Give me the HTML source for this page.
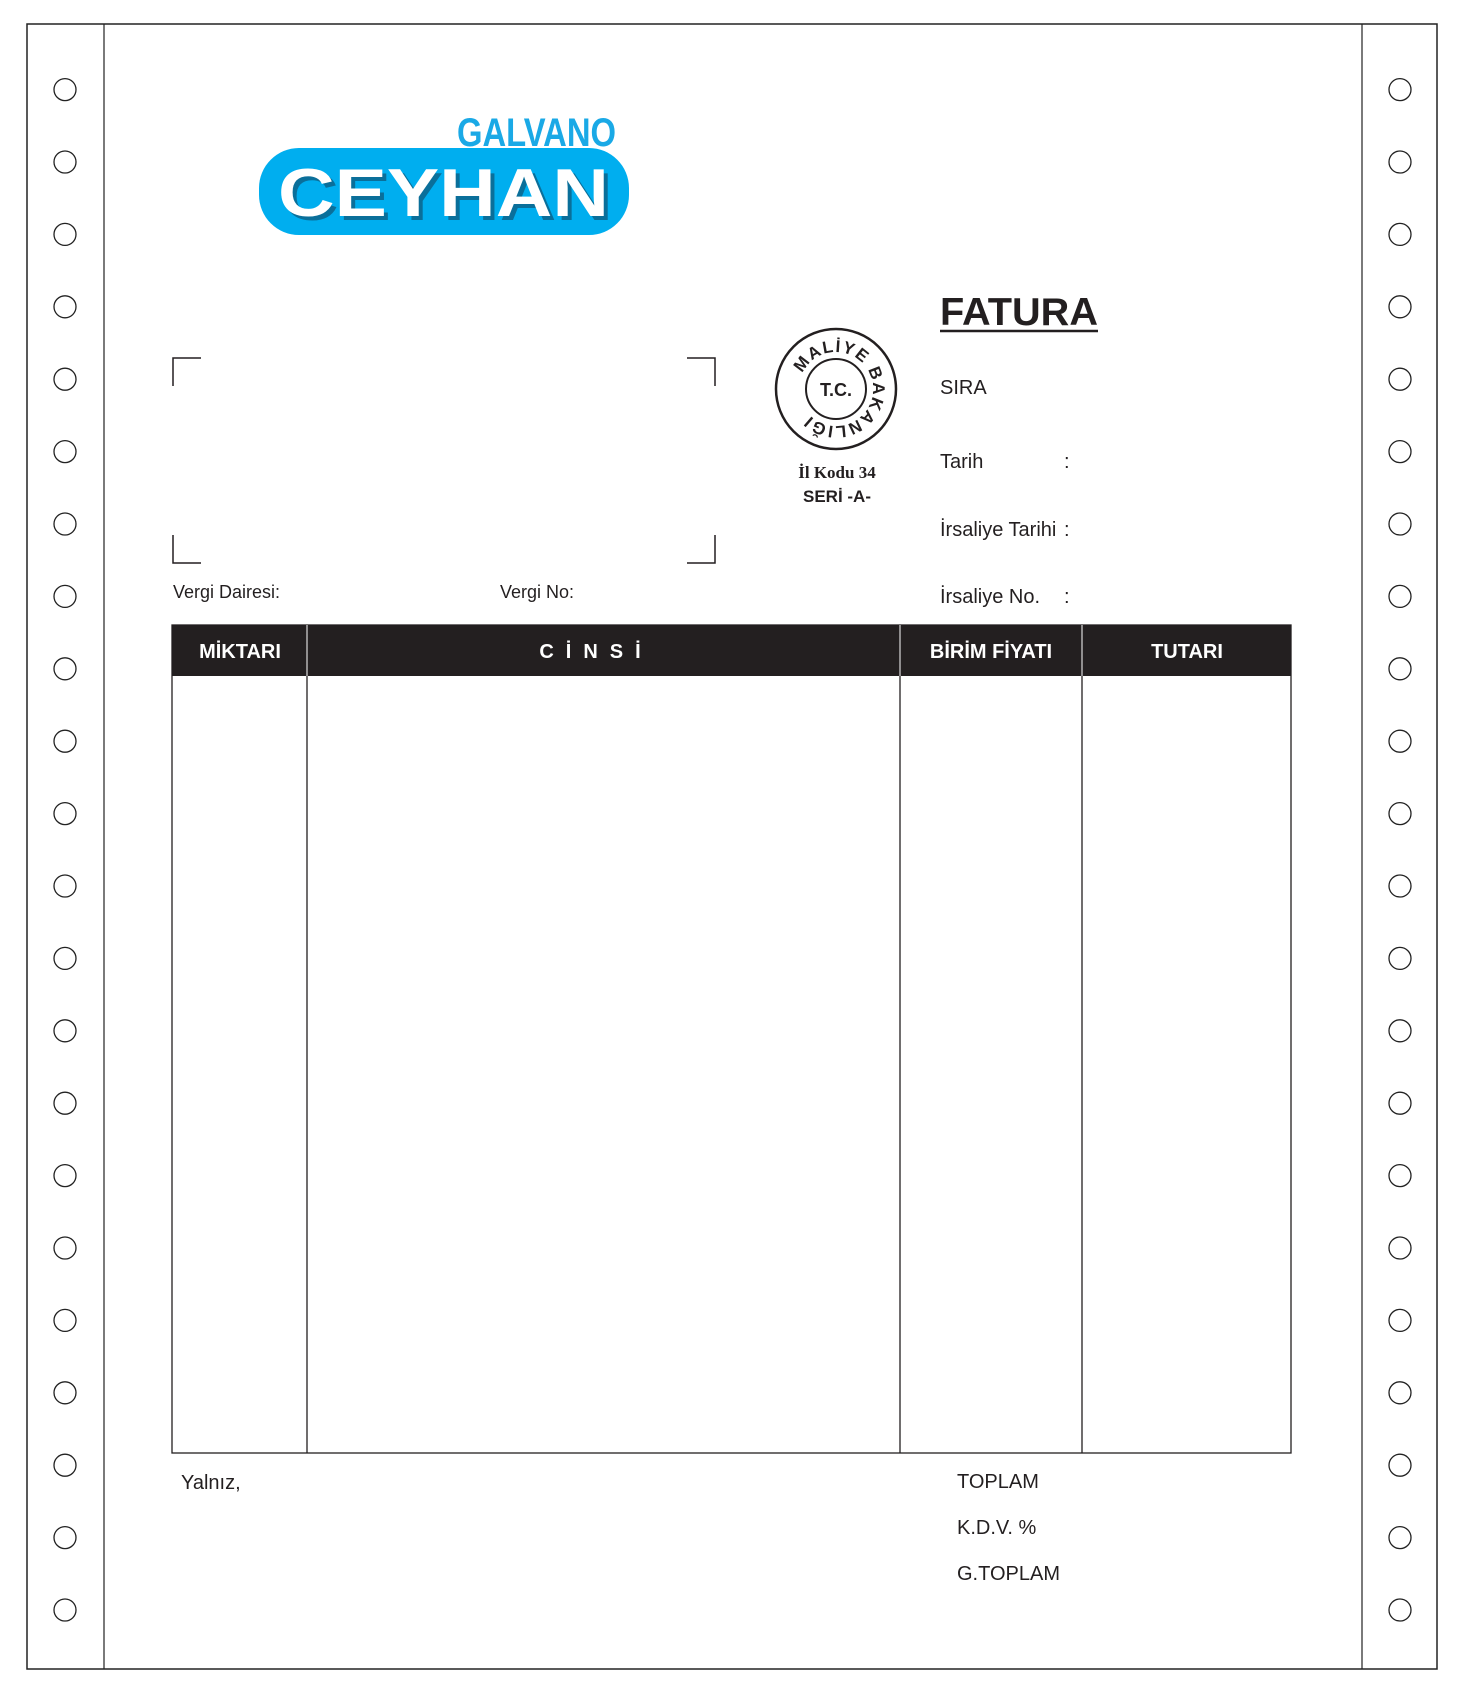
<!DOCTYPE html>
<html><head><meta charset="utf-8"><style>
html,body{margin:0;padding:0;background:#fff}
svg{display:block}
text{font-family:"Liberation Sans",sans-serif}
</style></head><body>
<svg width="1465" height="1695" viewBox="0 0 1465 1695" xmlns="http://www.w3.org/2000/svg">
<rect x="27" y="24" width="1410" height="1645" fill="none" stroke="#222" stroke-width="1.5"/>
<line x1="104" y1="24" x2="104" y2="1669" stroke="#222" stroke-width="1.2"/>
<line x1="1362" y1="24" x2="1362" y2="1669" stroke="#222" stroke-width="1.2"/>
<g fill="none" stroke="#222" stroke-width="1.3" id="holes">
<circle cx="65" cy="89.6" r="11"/><circle cx="65" cy="162" r="11"/><circle cx="65" cy="234.4" r="11"/><circle cx="65" cy="306.8" r="11"/><circle cx="65" cy="379.2" r="11"/><circle cx="65" cy="451.6" r="11"/><circle cx="65" cy="524" r="11"/><circle cx="65" cy="596.4" r="11"/><circle cx="65" cy="668.8" r="11"/><circle cx="65" cy="741.2" r="11"/><circle cx="65" cy="813.6" r="11"/><circle cx="65" cy="886" r="11"/><circle cx="65" cy="958.4" r="11"/><circle cx="65" cy="1030.8" r="11"/><circle cx="65" cy="1103.2" r="11"/><circle cx="65" cy="1175.6" r="11"/><circle cx="65" cy="1248" r="11"/><circle cx="65" cy="1320.4" r="11"/><circle cx="65" cy="1392.8" r="11"/><circle cx="65" cy="1465.2" r="11"/><circle cx="65" cy="1537.6" r="11"/><circle cx="65" cy="1610" r="11"/>
</g>
<use href="#holes" x="1335"/>
<!-- logo -->
<text x="457" y="146" font-size="40" font-weight="bold" fill="#1aa9e6" textLength="159" lengthAdjust="spacingAndGlyphs">GALVANO</text>
<rect x="259" y="148" width="370" height="87" rx="40" fill="#00aeef"/>
<text x="282" y="220" font-size="68" font-weight="bold" fill="#0a6f9a" textLength="331" lengthAdjust="spacingAndGlyphs">CEYHAN</text>
<text x="278" y="216" font-size="68" font-weight="bold" fill="#fff" textLength="331" lengthAdjust="spacingAndGlyphs">CEYHAN</text>
<!-- fatura -->
<text x="940" y="325" font-size="39" font-weight="bold" fill="#231f20" textLength="158" lengthAdjust="spacingAndGlyphs">FATURA</text>
<line x1="940" y1="331" x2="1098" y2="331" stroke="#231f20" stroke-width="2.5"/>
<g font-size="20" fill="#231f20">
<text x="940" y="394">SIRA</text>
<text x="940" y="468">Tarih</text><text x="1064" y="468">:</text>
<text x="940" y="536">İrsaliye Tarihi</text><text x="1064" y="536">:</text>
<text x="940" y="603">İrsaliye No.</text><text x="1064" y="603">:</text>
<text x="173" y="598" font-size="18">Vergi Dairesi:</text>
<text x="500" y="598" font-size="18">Vergi No:</text>
<text x="181" y="1489">Yalnız,</text>
<text x="957" y="1488">TOPLAM</text>
<text x="957" y="1534">K.D.V. %</text>
<text x="957" y="1580">G.TOPLAM</text>
</g>
<!-- stamp -->
<circle cx="836" cy="389" r="60" fill="none" stroke="#231f20" stroke-width="2.5"/>
<circle cx="836" cy="389" r="30" fill="none" stroke="#231f20" stroke-width="2"/>
<defs><path id="arc" d="M836,389 m-37,0 a37,37 0 1,1 74,0 a37,37 0 1,1 -74,0"/></defs>
<text font-size="17" font-weight="bold" fill="#231f20" letter-spacing="1.5"><textPath href="#arc" startOffset="16">MALİYE BAKANLIĞI</textPath></text>
<text x="836" y="396" font-size="18" font-weight="bold" text-anchor="middle" fill="#231f20">T.C.</text>
<text x="837" y="478" font-size="17" font-weight="bold" text-anchor="middle" fill="#231f20" style="font-family:'Liberation Serif',serif">İl Kodu 34</text>
<text x="837" y="502" font-size="17" font-weight="bold" text-anchor="middle" fill="#231f20">SERİ -A-</text>
<!-- corners -->
<g fill="none" stroke="#231f20" stroke-width="1.5">
<path d="M173,386 V358 H201"/><path d="M687,358 H715 V386"/>
<path d="M173,535 V563 H201"/><path d="M687,563 H715 V535"/>
</g>
<!-- table -->
<rect x="172" y="625" width="1119" height="51" fill="#231f20"/>
<rect x="172" y="625" width="1119" height="828" fill="none" stroke="#231f20" stroke-width="1.3"/>
<g stroke="#231f20" stroke-width="1.3">
<line x1="307" y1="625" x2="307" y2="1453"/><line x1="900" y1="625" x2="900" y2="1453"/><line x1="1082" y1="625" x2="1082" y2="1453"/>
</g>
<g stroke="#fff" stroke-width="1"><line x1="307" y1="625" x2="307" y2="676"/><line x1="900" y1="625" x2="900" y2="676"/><line x1="1082" y1="625" x2="1082" y2="676"/></g>
<g font-size="20" font-weight="bold" fill="#fff" text-anchor="middle">
<text x="240" y="658">MİKTARI</text>
<text x="596" y="658" letter-spacing="12">CİNSİ</text>
<text x="991" y="658">BİRİM FİYATI</text>
<text x="1187" y="658">TUTARI</text>
</g>
</svg>
</body></html>
